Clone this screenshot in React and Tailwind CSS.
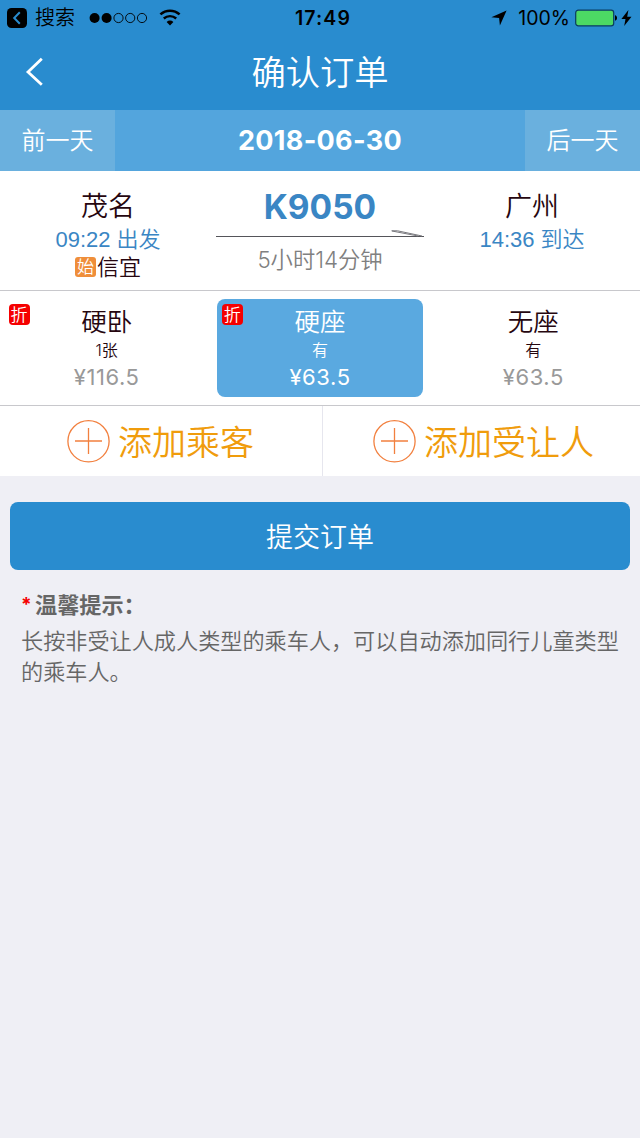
import React from 'react';
import clsx from 'clsx';

const seats = [
  { name: '硬卧', left: '1张', price: '¥116.5', discount: true },
  { name: '硬座', left: '有', price: '¥63.5', discount: true, selected: true },
  { name: '无座', left: '有', price: '¥63.5' },
];

function StatusBar() {
  return (
    <div className="flex h-9 items-center text-black">
      <div className="flex w-[213px] items-center pl-[7px]">
        <svg width="20" height="20" viewBox="0 0 20 20">
          <rect width="20" height="20" rx="4.5" fill="#000" />
          <path d="M12.8 4.2 7.2 10l5.6 5.8" fill="none" stroke="#298ccf" strokeWidth="2" />
        </svg>
        <span className="ml-[8px] text-[20px] leading-9">搜索</span>
        <svg className="ml-[14px]" width="60" height="12" viewBox="0 0 60 12">
          <circle cx="5.6" cy="6" r="5" />
          <circle cx="17.6" cy="6" r="5" />
          <circle cx="29.5" cy="6" r="4.6" fill="none" stroke="#000" strokeWidth="0.9" />
          <circle cx="41.2" cy="6" r="4.6" fill="none" stroke="#000" strokeWidth="0.9" />
          <circle cx="53" cy="6" r="4.6" fill="none" stroke="#000" strokeWidth="0.9" />
        </svg>
        <svg className="mb-[2px] ml-[10px]" width="22" height="17" viewBox="0 0 22 17">
          <path d="M1.4 5.4a14.2 14.2 0 0 1 19.2 0" fill="none" stroke="#000" strokeWidth="2.5" />
          <path d="M4.8 9.5a9.2 9.2 0 0 1 12.4 0" fill="none" stroke="#000" strokeWidth="2.4" />
          <path d="M7.6 13a5.4 5.4 0 0 1 6.8 0L11 16.6z" />
        </svg>
      </div>
      <div className="flex-1 pl-[6px] text-center text-[19.5px] font-semibold leading-9 tracking-[1.1px]">17:49</div>
      <div className="flex w-[213px] items-center justify-end pr-[8px]">
        <svg width="16" height="16" viewBox="0 0 16 16">
          <path d="M15.6.4 8.9 15.6 8.1 8 .4 7.2z" />
        </svg>
        <span className="ml-[11px] text-[19.5px] font-normal leading-9">100%</span>
        <svg className="ml-[5px]" width="43" height="18" viewBox="0 0 43 18">
          <rect x="0.7" y="1.2" width="38" height="15.6" rx="2.6" fill="#4cd964" stroke="#0b3c60" strokeWidth="1.2" />
          <path d="M40 6.3c1.3.3 2 1.4 2 2.7s-.7 2.4-2 2.7z" />
        </svg>
        <svg className="ml-[3px]" width="11" height="16" viewBox="0 0 11 16">
          <path d="M7.4 0 .4 9h4.1L3.2 16l7.3-9.2H6.2z" />
        </svg>
      </div>
    </div>
  );
}

function Header() {
  return (
    <header className="h-[110px] bg-[#298ccf]">
      <StatusBar />
      <div className="flex h-[72px] items-center">
        <button className="w-20 pl-[25px]">
          <svg width="20" height="30" viewBox="0 0 20 30">
            <path d="M16.8 1.8 3 15l13.8 12.8" fill="none" stroke="#fff" strokeWidth="2.8" />
          </svg>
        </button>
        <h1 className="flex-1 pt-[2px] text-center text-[34.3px] leading-[72px] text-white">确认订单</h1>
        <div className="w-20" />
      </div>
    </header>
  );
}

function DateBar() {
  return (
    <div className="flex h-[61px] bg-[#53a5dd] text-center leading-[61px] text-white">
      <button className="w-[115px] bg-[#6ab0de] text-[24px]">前一天</button>
      <div className="flex-1 text-[27px] font-bold tracking-[0.3px]">2018-06-30</div>
      <button className="w-[115px] bg-[#6ab0de] text-[24px]">后一天</button>
    </div>
  );
}

function Route() {
  return (
    <section className="flex h-[120px] border-b border-[#c8c8cc] bg-white pt-[18px] text-center text-[#26060f]">
      <div className="w-[216px]">
        <div className="text-[27px] leading-9">茂名</div>
        <div className="font-[Liberation_Sans,Noto_Sans_CJK_SC,sans-serif] text-[22px] leading-[30px] text-[#3a86c4]">09:22 出发</div>
        <div className="flex h-6 items-center justify-center">
          <span className="h-5 w-[21px] rounded-[3px] bg-[#ef8e3a] text-[17px] leading-5 text-white">始</span>
          <span className="ml-px text-[22px] leading-6">信宜</span>
        </div>
      </div>
      <div className="w-[208px]">
        <div className="text-[33.5px] font-bold leading-9 text-[#3a86c4]">K9050</div>
        <svg className="block" width="208" height="16" viewBox="0 0 208 16">
          <path d="M0 11.5h208" fill="none" stroke="#55555a" strokeWidth="1.2" />
          <path d="M175.5 5.8h6L206 11M176 6l26 5" fill="none" stroke="#77777c" strokeWidth="1" />
        </svg>
        <div className="text-[22.3px] leading-[38px] text-[#808080]">5小时14分钟</div>
      </div>
      <div className="w-[216px]">
        <div className="text-[27px] leading-9">广州</div>
        <div className="font-[Liberation_Sans,Noto_Sans_CJK_SC,sans-serif] text-[22px] leading-[30px] text-[#3a86c4]">14:36 到达</div>
      </div>
    </section>
  );
}

function Seat({ seat }) {
  return (
    <div
      className={clsx(
        'relative mx-[3.5px] h-[98px] rounded-[8px] pt-[6px] text-center',
        seat.selected ? 'bg-[#5aa9e0] text-white' : 'text-[#26060f]'
      )}
    >
      {seat.discount && (
        <span className="absolute left-[5px] top-[5px] h-[21px] w-[21px] rounded-[4px] bg-[#f50000] text-[17px] leading-[22px] text-white">
          折
        </span>
      )}
      <div className="text-[25.5px] leading-[34px]">{seat.name}</div>
      <div className="text-[16px] leading-[22px]">{seat.left}</div>
      <div className={clsx('text-[22px] font-normal leading-8 tracking-[0.6px]', !seat.selected && 'text-[#999]')}>
        {seat.price}
      </div>
    </div>
  );
}

function AddButton({ label }) {
  return (
    <button className="flex items-center text-[34px] leading-[70px] text-[#f09c0c]">
      <svg className="mr-[8px]" width="43" height="43" viewBox="0 0 43 43" fill="none" stroke="#f2803f" strokeWidth="1.3">
        <circle cx="21.5" cy="21.3" r="20.6" />
        <path d="M8 21h27M21.5 8v26" />
      </svg>
      <span className="pt-[3px]">{label}</span>
    </button>
  );
}

export default function App() {
  return (
    <div className="h-[1138px] w-[640px] overflow-hidden bg-[#efeff5] font-[Inter,Noto_Sans_CJK_SC,sans-serif] font-[350]">
      <Header />
      <DateBar />
      <Route />
      <section className="grid h-[115px] grid-cols-3 border-b border-[#c8c8cc] bg-white pt-2">
        {seats.map((seat) => (
          <Seat key={seat.name} seat={seat} />
        ))}
      </section>
      <section className="flex h-[70px] bg-white">
        <div className="flex w-[323px] items-center justify-center border-r border-[#e6e6ee] pr-px">
          <AddButton label="添加乘客" />
        </div>
        <div className="flex flex-1 items-center justify-center pl-[4px]">
          <AddButton label="添加受让人" />
        </div>
      </section>
      <div className="px-[10px] pt-[26px]">
        <button className="h-[68px] w-full rounded-[8px] bg-[#298ccf] pt-[3px] text-[27px] leading-[65px] text-white">
          提交订单
        </button>
      </div>
      <section className="pl-[21px] pt-[19px] text-[22.15px] text-[#666]">
        <div className="flex h-[32px] font-bold leading-[32px]">
          <span className="w-[14px] text-[19px] text-[#f50000]">*</span>
          温馨提示：
        </div>
        <p className="w-[606px] pt-[5px] leading-[31px]">
          长按非受让人成人类型的乘车人，可以自动添加同行儿童类型的乘车人。
        </p>
      </section>
    </div>
  );
}
